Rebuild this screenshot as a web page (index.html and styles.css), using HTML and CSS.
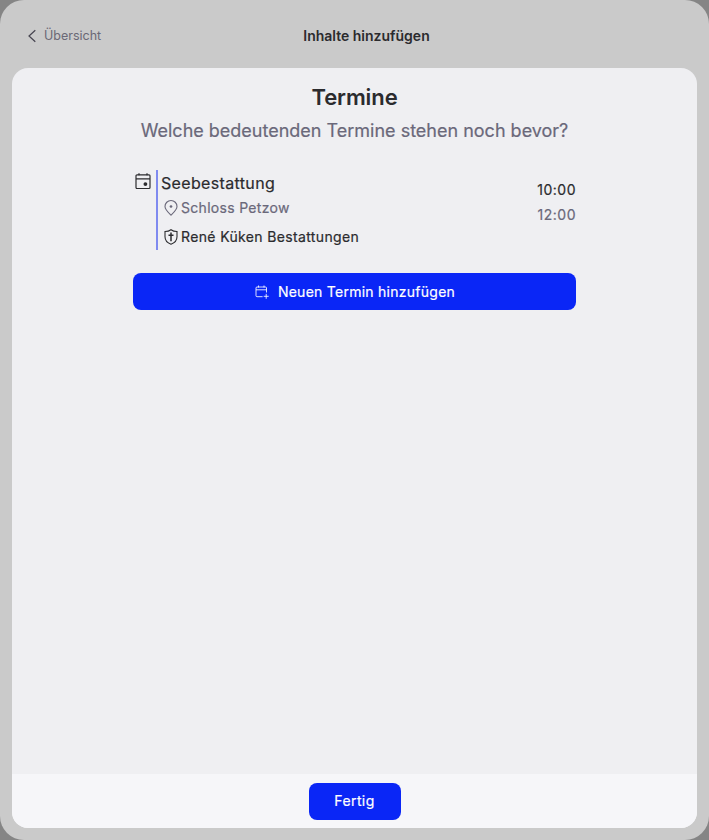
FILE: index.html
```html
<!DOCTYPE html>
<html lang="de">
<head>
<meta charset="utf-8">
<title>Inhalte hinzufügen</title>
<link rel="stylesheet" href="styles.css">
</head>
<body>
<div class="modal">
  <header class="topbar">
    <a class="back"><svg class="chevron" viewBox="0 0 8 12"><path d="M7.300.2 1 6l6.300 5.800"/></svg><span>Übersicht</span></a>
    <h1 class="heading">Inhalte hinzufügen</h1>
  </header>
  <main class="panel">
    <section class="content">
      <h2 class="title">Termine</h2>
      <p class="subtitle">Welche bedeutenden Termine stehen noch bevor?</p>
      <article class="event">
        <svg class="calendar" viewBox="0 0 16 17"><rect x="1" y="1.800" width="14" height="13.700" rx="1"/><path d="M1 5.800h14M4 .2v2M12 .2v2"/><circle class="dot" cx="10.400" cy="11.100" r="1.900"/></svg>
        <div class="details">
          <div class="name">Seebestattung</div>
          <div class="row place"><svg viewBox="0 0 14 16"><path d="M7 15.200C4.800 13 1 9.700 1 6.500a6 6 0 0 1 12 0c0 3.200-3.800 6.500-6 8.700z"/><circle class="dot" cx="7" cy="6.500" r="1.350"/></svg><span>Schloss Petzow</span></div>
          <div class="row host"><svg viewBox="0 0 14 16"><path d="M7 .7C5.300 2 3.200 2.500 1 2.500v5.300c0 3.500 2.700 6.200 6 7.400 3.300-1.200 6-3.900 6-7.400V2.500C10.800 2.500 8.700 2 7 .7z"/><path class="cross" d="M7 3.600v8.600M4.500 6.200h5"/></svg><span>René Küken Bestattungen</span></div>
        </div>
        <div class="times"><time>10:00</time><time class="end">12:00</time></div>
      </article>
      <button class="button add"><svg viewBox="0 0 14 14"><path d="M7.600 11.700H2a1 1 0 0 1-1-1V3a1 1 0 0 1 1-1h8.500a1 1 0 0 1 1 1v4.500M1 4.800h10.500M3.500.5v2M9 .5v2M11.200 8.800v5M8.700 11.300h5"/></svg><span>Neuen Termin hinzufügen</span></button>
    </section>
    <footer class="footer"><button class="button done">Fertig</button></footer>
  </main>
</div>
</body>
</html>
```
FILE: styles.css
```css
* { box-sizing: border-box; margin: 0; padding: 0; }
body { height: 840px; background: #858585; font-family: Inter, "Liberation Sans", sans-serif; color: #2b2b2e; }
svg { fill: none; stroke: currentColor; stroke-width: 1.2; flex: none; overflow: visible; }
.dot { fill: currentColor; stroke: none; }
.cross { stroke-width: 1.5; }
.modal { height: 840px; padding: 0 12px 12px; border-radius: 24px; background: #cacaca; display: flex; flex-direction: column; }
.topbar { height: 68px; padding: 4px 0 0 16px; display: grid; grid-template-columns: 1fr auto 1fr; align-items: center; }
.back { display: flex; align-items: center; gap: 8px; font-size: 12.5px; line-height: 16px; color: #6a6876; padding-bottom: 1px; }
.chevron { width: 8px; height: 12px; color: #45434f; }
.heading { font-size: 14px; font-weight: 600; line-height: 20px; padding-left: 8px; }
.panel { flex: 1; border-radius: 16px; overflow: hidden; background: #efeff2; display: flex; flex-direction: column; }
.content { flex: 1; width: 443px; margin: 0 auto; padding-top: 15px; }
.title { font-size: 22px; line-height: 28px; font-weight: 600; letter-spacing: -.1px; text-align: center; }
.subtitle { margin-top: 7px; font-size: 18px; line-height: 26px; text-align: center; white-space: nowrap; color: #6a687a; -webkit-text-stroke: .2px; }
.event { height: 80px; margin-top: 26px; display: flex; -webkit-text-stroke: .2px; }
.calendar { width: 16px; height: 17px; margin: 3px 5px 0 2px; }
.details { flex: 1; border-left: 2px solid #7f8af0; padding-left: 3px; letter-spacing: .35px; }
.name { font-size: 16px; line-height: 26px; }
.row { display: flex; align-items: center; gap: 3px; padding-left: 3px; font-size: 14px; line-height: 18px; letter-spacing: .36px; }
.row svg { width: 14px; height: 16px; margin-bottom: 1px; stroke-width: 1.1; }
.place { height: 24px; color: #6a687a; letter-spacing: .3px; }
.host { height: 24px; margin-top: 5px; }
.times { padding-top: 7px; display: flex; flex-direction: column; text-align: right; font-size: 14px; line-height: 25px; letter-spacing: .5px; }
.end { color: #6a687a; }
.button { border: 0; background: #0a26f6; color: #fff; font: 14px/20px Inter, "Liberation Sans", sans-serif; letter-spacing: .4px; display: flex; align-items: center; justify-content: center; border-radius: 8px; height: 37px; -webkit-text-stroke: .2px; }
.add { width: 100%; margin-top: 23px; gap: 9px; letter-spacing: .26px; }
.add svg { width: 14px; height: 14px; stroke-width: 1; opacity: .85; }
.add span { margin-right: -1px; }
.footer { height: 54px; background: #f6f6f9; display: flex; align-items: center; justify-content: center; }
.done { width: 92px; }
```
